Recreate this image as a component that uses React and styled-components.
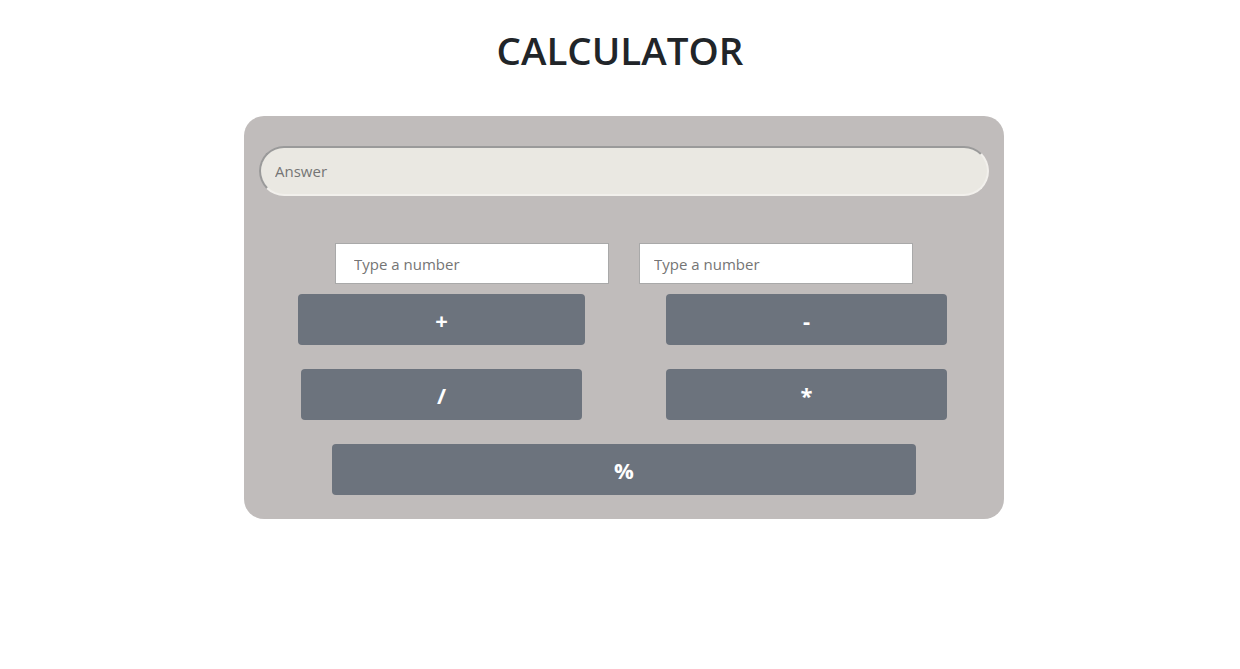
import React from 'react';
import styled, { createGlobalStyle } from 'styled-components';

const GlobalStyle = createGlobalStyle`
    body {
        margin: 0;
        background: #fff;
        font-family: 'Open Sans', 'Liberation Sans', sans-serif;
        color: #212529;
    }
`

function App() {
    return (
        <>
        <GlobalStyle />
        <Page>
            <Title>CALCULATOR</Title>
            <Panel>
                <Answer placeholder='Answer' readOnly />
                <InputRow>
                    <NumberInput type='text' placeholder='Type a number' $pad={18} />
                    <NumberInput type='text' placeholder='Type a number' $pad={14} />
                </InputRow>
                <ButtonGrid>
                    <OpButton $w={287}>+</OpButton>
                    <OpButton $w={281}>-</OpButton>
                    <OpButton $w={281}>/</OpButton>
                    <OpButton $w={281}>*</OpButton>
                    <OpButton $w={584} $wide>%</OpButton>
                </ButtonGrid>
            </Panel>
        </Page>
        </>
    )
}

export default App;

const Page = styled.div`
    display: flex;
    flex-direction: column;
    align-items: center;
    padding-top: 24px;
`

const Title = styled.h1`
    margin: 0 0 40px;
    font-size: 38.5px;
    font-weight: 600;
    line-height: 52px;
`

const Panel = styled.div`
    box-sizing: border-box;
    width: 760px;
    margin-left: 8px;
    padding: 30px 15px 24px;
    background: #c0bcbb;
    border-radius: 20px;
`

const Answer = styled.input`
    display: block;
    box-sizing: border-box;
    width: 100%;
    height: 50px;
    padding: 0 14px;
    border: 2px solid;
    border-color: #9a9a9a #f2f0ec #f2f0ec #9a9a9a;
    border-radius: 25px;
    background: #eae8e2;
    font-family: inherit;
    font-size: 15px;
    outline: none;
    &::placeholder { color: #757575; }
`

const InputRow = styled.div`
    display: flex;
    justify-content: center;
    gap: 30px;
    margin-top: 47px;
`

const NumberInput = styled.input`
    box-sizing: border-box;
    width: 274px;
    height: 41px;
    padding: 0 ${props => props.$pad}px;
    border: 1px solid #a9a9a9;
    background: #fff;
    font-family: inherit;
    font-size: 15px;
    outline: none;
    &::placeholder { color: #757575; }
`

const ButtonGrid = styled.div`
    display: grid;
    grid-template-columns: 1fr 1fr;
    justify-items: center;
    row-gap: 24px;
    margin-top: 10px;
`

const OpButton = styled.button`
    grid-column: ${props => props.$wide ? '1 / span 2' : 'auto'};
    width: ${props => props.$w}px;
    height: 51px;
    border: none;
    border-radius: 4px;
    background: #6c737d;
    color: #fff;
    font-family: inherit;
    font-size: 22px;
    font-weight: 700;
    cursor: pointer;
`
